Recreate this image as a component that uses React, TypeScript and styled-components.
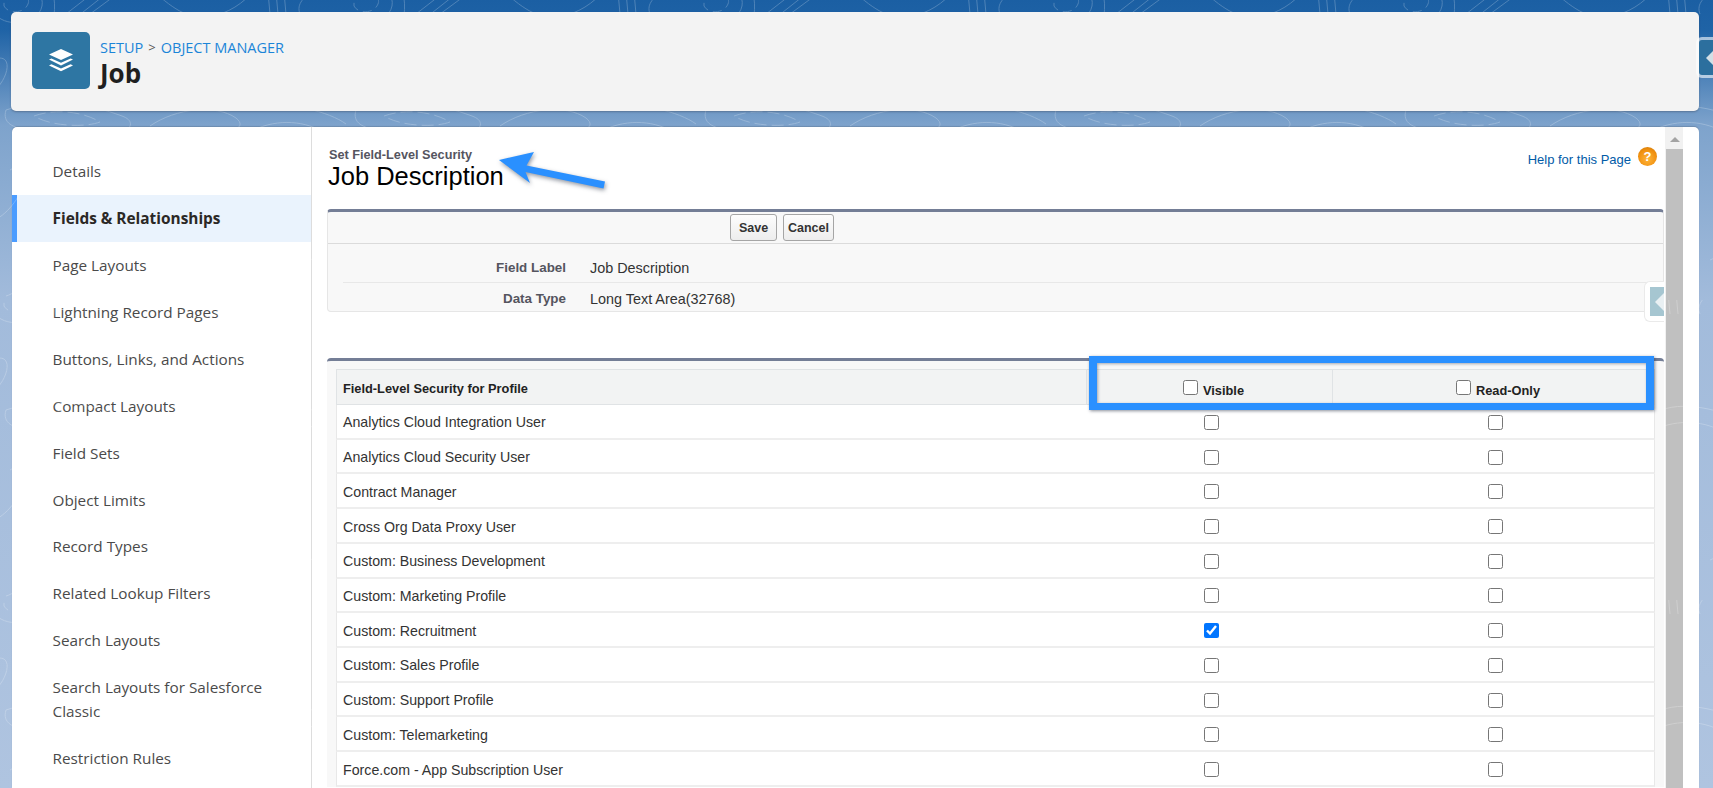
import React, { FC } from 'react'
import styled, { createGlobalStyle } from 'styled-components'

const sideItems = [
  'Details',
  'Fields & Relationships',
  'Page Layouts',
  'Lightning Record Pages',
  'Buttons, Links, and Actions',
  'Compact Layouts',
  'Field Sets',
  'Object Limits',
  'Record Types',
  'Related Lookup Filters',
  'Search Layouts',
  'Search Layouts for Salesforce Classic',
  'Restriction Rules',
]

const profiles = [
  'Analytics Cloud Integration User',
  'Analytics Cloud Security User',
  'Contract Manager',
  'Cross Org Data Proxy User',
  'Custom: Business Development',
  'Custom: Marketing Profile',
  'Custom: Recruitment',
  'Custom: Sales Profile',
  'Custom: Support Profile',
  'Custom: Telemarketing',
  'Force.com - App Subscription User',
]

const App: FC = () => {
  return (
    <Page>
      <GlobalStyle />
      <Contours aria-hidden="true">
        <defs>
          <pattern id="topo" width="350" height="300" patternUnits="userSpaceOnUse">
            <g fill="none" stroke="#fff" strokeWidth="1">
              <path d="M-10 -6C10 -24 46 -14 42 6C38 26 2 28 -6 12C-10 4 -12 -2 -10 -6Z" />
              <path d="M4 -2C14 -12 32 -6 28 4C24 14 8 14 4 6Z" strokeDasharray="9 5" />
              <path d="M52 -10C58 8 52 24 50 40" />
              <path d="M66 14L102 -14M78 16L116 -14M90 14L128 -14" />
              <path d="M150 -12C170 6 188 22 214 16C236 10 248 -2 258 -14" />
              <path d="M200 -12C206 0 224 4 238 -12" />
              <path d="M268 -8L270 14M276 -8L278 14M284 -8L286 14" />
              <path d="M300 14C296 4 304 -4 316 -10" />
              <path d="M6 110C46 96 90 104 122 116C144 124 120 142 86 136C50 130 -2 136 6 110Z" />
              <path d="M34 116C56 108 84 112 100 122C84 128 50 126 34 116Z" strokeDasharray="12 5" />
              <path d="M150 126C176 108 216 104 236 118C254 132 208 138 184 134" />
              <path d="M262 110C286 100 330 112 346 124M258 128C284 118 310 122 330 136" />
              <path d="M10 170C44 150 20 210 -6 220M330 160C352 176 340 220 322 240" />
              <path d="M20 250C60 226 30 290 6 296M310 260C342 244 346 286 320 296" />
              <path d="M-8 60C16 50 8 82 -8 92M342 62C362 56 352 92 340 96" />
            </g>
          </pattern>
        </defs>
        <rect width="100%" height="100%" fill="url(#topo)" />
      </Contours>

      <Header>
        <ObjectIcon>
          <svg width="26" height="24" viewBox="0 0 26 24">
            <path d="M13 0L25 5.4L13 11L1 5.4Z" fill="#fff" />
            <path d="M1 10.6L3.4 9.4L13 13.8L22.6 9.4L25 10.6L13 16.4Z" fill="#fff" />
            <path d="M1 16.4L3.4 15.2L13 19.6L22.6 15.2L25 16.4L13 22.2Z" fill="#fff" />
          </svg>
        </ObjectIcon>
        <HeaderText>
          <Crumbs>
            <CrumbLink>SETUP</CrumbLink>
            <CrumbSep>&gt;</CrumbSep>
            <CrumbLink>OBJECT MANAGER</CrumbLink>
          </Crumbs>
          <ObjectName>Job</ObjectName>
        </HeaderText>
      </Header>
      <TopHandle>
        <HandleArrow $size={7} $color="#d3dfe6" />
      </TopHandle>

      <Main>
        <Sidebar>
          {sideItems.map((item) => (
            <SideItem key={item} $active={item === 'Fields & Relationships'}>
              {item}
            </SideItem>
          ))}
        </Sidebar>

        <Content>
          <TitleRow>
            <div>
              <Eyebrow>Set Field-Level Security</Eyebrow>
              <Title>Job Description</Title>
            </div>
            <HelpLink>
              Help for this Page
              <HelpIcon>?</HelpIcon>
            </HelpLink>
            <TitleArrow width="130" height="50" viewBox="0 0 130 50">
              <path
                d="M6 17L41 9L33.500 22.500L112 38.500L110.500 45.500L32.500 29L37 40Z"
                fill="#2a90ff"
              />
            </TitleArrow>
          </TitleRow>

          <InfoPanel>
            <ButtonBar>
              <ActionButton>Save</ActionButton>
              <ActionButton>Cancel</ActionButton>
            </ButtonBar>
            <InfoRow $first>
              <InfoLabel>Field Label</InfoLabel>
              <InfoValue>Job Description</InfoValue>
            </InfoRow>
            <InfoRow>
              <InfoLabel>Data Type</InfoLabel>
              <InfoValue>Long Text Area(32768)</InfoValue>
            </InfoRow>
            <SideHandle>
              <SideHandleInner>
                <HandleArrow $size={9} $color="#e9f0f3" />
              </SideHandleInner>
            </SideHandle>
          </InfoPanel>

          <TablePanel>
            <HeadRow>
              <HeadName>Field-Level Security for Profile</HeadName>
              <HeadCheck $nudge={8}>
                <Check type="checkbox" />
                <HeadCheckLabel>Visible</HeadCheckLabel>
              </HeadCheck>
              <HeadCheck $nudge={9}>
                <Check type="checkbox" />
                <HeadCheckLabel>Read-Only</HeadCheckLabel>
              </HeadCheck>
            </HeadRow>
            {profiles.map((profile) => (
              <ProfileRow key={profile}>
                <ProfileName>{profile}</ProfileName>
                <CheckCell>
                  <Check type="checkbox" defaultChecked={profile === 'Custom: Recruitment'} />
                </CheckCell>
                <CheckCell>
                  <Check type="checkbox" />
                </CheckCell>
              </ProfileRow>
            ))}
            <Highlight />
          </TablePanel>
        </Content>

        <Scrollbar>
          <ScrollUp />
          <ScrollThumb />
        </Scrollbar>
      </Main>
    </Page>
  )
}

const GlobalStyle = createGlobalStyle`
  html, body {
    margin: 0;
    padding: 0;
    overflow: hidden;
  }
  * {
    box-sizing: border-box;
  }
`

const Page = styled.div`
  position: relative;
  height: 788px;
  overflow: hidden;
  padding: 12px 14px 0 11px;
  background: linear-gradient(180deg, #1b5fa3 0, #1f63a6 30px, #7ea3cc 125px, #a2bbdb 300px, #afc4e0 788px);
  font-family: 'Open Sans', sans-serif;
`

const Contours = styled.svg`
  position: absolute;
  top: 0;
  left: 0;
  width: 100%;
  height: 100%;
  opacity: 0.22;
`

const Header = styled.div`
  position: relative;
  display: flex;
  align-items: center;
  height: 99px;
  padding: 0 0 2px 21px;
  background: #f3f3f3;
  border-radius: 5px;
  box-shadow: 0 1px 2px rgba(60, 70, 90, 0.45);
`

const ObjectIcon = styled.div`
  display: flex;
  align-items: center;
  justify-content: center;
  width: 58px;
  height: 57px;
  background: #2e76a3;
  border-radius: 5px;
`

const HeaderText = styled.div`
  margin: 4px 0 0 10px;
`

const Crumbs = styled.div`
  display: flex;
  align-items: center;
  gap: 5px;
  height: 21px;
  padding-top: 2px;
  font-size: 14.5px;
`

const CrumbLink = styled.span`
  color: #1b85d8;
`

const CrumbSep = styled.span`
  color: #555;
  font-size: 13px;
`

const ObjectName = styled.div`
  font-size: 26px;
  line-height: 33px;
  font-weight: 700;
  color: #1f1f1f;
`

const TopHandle = styled.div`
  position: absolute;
  top: 37px;
  right: 0;
  display: flex;
  align-items: center;
  justify-content: flex-end;
  width: 17px;
  height: 41px;
  background: #2c6f9e;
  background-clip: padding-box;
  border: 3px solid rgba(255, 255, 255, 0.6);
  border-right: 0;
  border-radius: 6px 0 0 6px;
`

const HandleArrow = styled.div<{ $size: number; $color: string }>`
  width: 0;
  height: 0;
  border-top: ${(p) => p.$size}px solid transparent;
  border-bottom: ${(p) => p.$size}px solid transparent;
  border-right: ${(p) => p.$size}px solid ${(p) => p.$color};
`

const Main = styled.div`
  display: flex;
  height: 661px;
  margin-top: 16px;
  margin-left: 1px;
  background: #fff;
  border-radius: 5px 5px 0 0;
  overflow: hidden;
  box-shadow: 0 -1px 1px rgba(60, 70, 90, 0.25);
`

const Sidebar = styled.div`
  flex: 0 0 300px;
  padding-top: 21px;
  border-right: 1px solid #dddddd;
`

const SideItem = styled.div<{ $active?: boolean }>`
  padding: ${(p) => (p.$active ? '12.5px 20px 10.4px 35.5px' : '11.45px 20px 11.45px 40.5px')};
  font-size: ${(p) => (p.$active ? 15.4 : 15.3)}px;
  line-height: 24px;
  color: ${(p) => (p.$active ? '#2b2826' : '#4a4a4a')};
  font-weight: ${(p) => (p.$active ? 700 : 400)};
  background: ${(p) => (p.$active ? '#eaf3fd' : 'transparent')};
  border-left: ${(p) => (p.$active ? '5px solid #4b9cff' : '0')};
`

const Content = styled.div`
  flex: 0 0 1353px;
  padding: 20px 1px 0 15px;
  font-family: 'Liberation Sans', Arial, sans-serif;
`

const TitleRow = styled.div`
  position: relative;
  display: flex;
  justify-content: space-between;
  height: 62px;
  padding-left: 1px;
`

const Eyebrow = styled.div`
  padding: 1px 0 0 1px;
  font-size: 12.7px;
  line-height: 14px;
  font-weight: 700;
  color: #55555f;
`

const Title = styled.div`
  margin-top: -1px;
  font-size: 25.5px;
  line-height: 30px;
  color: #000;
`

const HelpLink = styled.div`
  display: flex;
  align-items: center;
  gap: 7px;
  height: 20px;
  margin: 2px 7px 0 0;
  font-size: 13px;
  color: #015ba7;
`

const HelpIcon = styled.span`
  position: relative;
  top: -2.5px;
  display: flex;
  align-items: center;
  justify-content: center;
  width: 19px;
  height: 19px;
  border-radius: 50%;
  background: radial-gradient(circle at 50% 65%, #ffb43a 0, #f0900f 60%, #c87408 100%);
  color: #fff;
  font-size: 13px;
  font-weight: 700;
`

const TitleArrow = styled.svg`
  position: absolute;
  top: -4px;
  left: 166px;
  filter: drop-shadow(1px 2px 2px rgba(40, 50, 70, 0.5));
`

const InfoPanel = styled.div`
  position: relative;
  height: 103px;
  background: #f8f8f8;
  border: 1px solid #e6e6e6;
  border-top: 3px solid #747e96;
  border-radius: 4px;
`

const ButtonBar = styled.div`
  display: flex;
  gap: 6px;
  height: 32px;
  padding: 2px 0 0 402px;
  border-bottom: 1px solid #dbdbdb;
`

const ActionButton = styled.button`
  height: 27px;
  padding: 0 4px;
  min-width: 47px;
  background: linear-gradient(#fdfdfd, #ededed);
  border: 1px solid #a5a5a5;
  border-radius: 3px;
  font-family: 'Liberation Sans', Arial, sans-serif;
  font-size: 12.5px;
  font-weight: 700;
  color: #333;
`

const InfoRow = styled.div<{ $first?: boolean }>`
  display: flex;
  height: ${(p) => (p.$first ? 39 : 29)}px;
  margin-left: 15px;
  padding-top: ${(p) => (p.$first ? 16 : 8)}px;
  border-bottom: ${(p) => (p.$first ? '1px solid #e8e8e8' : '0')};
  line-height: 16px;
`

const InfoLabel = styled.div`
  width: 223px;
  text-align: right;
  font-size: 13.4px;
  font-weight: 700;
  color: #55555f;
`

const InfoValue = styled.div`
  margin-left: 24px;
  font-size: 14.4px;
  color: #333;
`

const SideHandle = styled.div`
  position: absolute;
  top: 69px;
  right: -1px;
  width: 20px;
  height: 41px;
  padding: 5px 0 5px 5px;
  background: #fff;
  border: 1px solid #eaeaea;
  border-right: 0;
  border-radius: 6px 0 0 6px;
`

const SideHandleInner = styled.div`
  display: flex;
  align-items: center;
  justify-content: flex-end;
  height: 100%;
  background: #a6c6d1;
`

const TablePanel = styled.div`
  position: relative;
  margin-top: 46px;
  padding: 8px 9px 0 9px;
  background: #f8f8f8;
  border-top: 3px solid #747e96;
  border-radius: 4px 4px 0 0;
`

const HeadRow = styled.div`
  display: grid;
  grid-template-columns: 749px 246px 1fr;
  height: 36px;
  background: #f2f3f3;
  border: 1px solid #e0e3e5;
`

const HeadName = styled.div`
  display: flex;
  align-items: center;
  padding: 2px 0 0 6px;
  font-size: 12.8px;
  font-weight: 700;
  color: #222;
`

const HeadCheck = styled.div<{ $nudge: number }>`
  display: flex;
  align-items: center;
  justify-content: center;
  gap: 5px;
  padding-left: ${(p) => p.$nudge}px;
  border-left: 1px solid #e0e3e5;
`

const HeadCheckLabel = styled.span`
  position: relative;
  top: 3px;
  font-size: 12.8px;
  font-weight: 700;
  color: #222;
`

const ProfileRow = styled.div`
  display: grid;
  grid-template-columns: 749px 251px 1fr;
  align-items: center;
  height: 34.72px;
  padding-top: 2px;
  background: #fff;
  border-right: 1px solid #e8e8e8;
  border-left: 1px solid #e8e8e8;
  border-bottom: 2px solid #eeeeee;
`

const ProfileName = styled.div`
  padding-left: 6px;
  font-size: 14.2px;
  color: #333;
`

const CheckCell = styled.div`
  display: flex;
  justify-content: center;
`

const Check = styled.input`
  width: 15px;
  height: 15px;
  margin: 0;
`

const Highlight = styled.div`
  position: absolute;
  top: -5px;
  right: 10px;
  width: 565px;
  height: 54px;
  border: 8px solid #2a90ff;
  border-top-width: 7px;
  border-bottom-width: 7px;
  box-shadow: 1px 1px 3px rgba(40, 50, 70, 0.55), inset 1px 1px 3px rgba(40, 50, 70, 0.4);
`

const Scrollbar = styled.div`
  flex: 0 0 18px;
  padding-left: 1px;
  background: #f1f1f1;
`

const ScrollUp = styled.div`
  width: 0;
  height: 0;
  margin-left: 4px;
  margin-bottom: 7px;
  border-left: 5px solid transparent;
  border-right: 5px solid transparent;
  border-bottom: 5px solid #a3a3a3;
  border-top: 10px solid transparent;
  box-sizing: content-box;
`

const ScrollThumb = styled.div`
  height: 640px;
  background: #c0c0c0;
`

export default App
